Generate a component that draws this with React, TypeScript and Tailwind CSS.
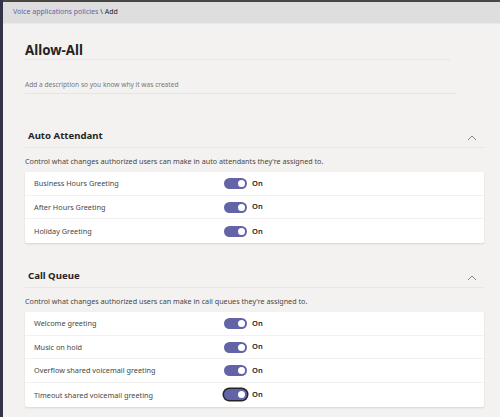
import React from "react";

const Toggle = ({ focused = false }: { focused?: boolean }) => (
  <div
    className={
      "relative w-[23px] h-[11px] rounded-full bg-[#6264a7] " +
      (focused ? "ring-[1.5px] ring-[#252423]" : "")
    }
  >
    <div className="absolute right-[2px] top-[2px] w-[7px] h-[7px] rounded-full bg-white" />
  </div>
);

const Row = ({ label, focused = false, last = false }: { label: string; focused?: boolean; last?: boolean }) => (
  <div className={"flex items-center h-[23.7px] " + (last ? "" : "border-b border-[#f1f1f1]")}>
    <div className="w-[199px] pl-[9px] text-[7.3px] text-[#484644]">{label}</div>
    <Toggle focused={focused} />
    <div className="ml-[5px] text-[7.5px] font-semibold text-[#252423]">On</div>
  </div>
);

const Chevron = () => (
  <svg width="10" height="6" viewBox="0 0 10 6" className="mr-[7px]">
    <path d="M1 5 L5 1 L9 5" stroke="#8a8886" strokeWidth="1" fill="none" />
  </svg>
);

const Section = ({ title, desc, rows, top }: { title: string; desc: string; rows: { l: string; f?: boolean }[]; top: string }) => (
  <div className={top}>
    <div className="flex items-center justify-between h-[20px] pl-[3px] border-b border-[#e8e7e6] w-[459px]">
      <div className="text-[9.6px] font-bold text-[#252423] -mt-[2px]">{title}</div>
      <Chevron />
    </div>
    <div className="mt-[6px] text-[7.2px] text-[#484644] leading-[14px]">{desc}</div>
    <div className="mt-[4px] w-[459px] bg-white rounded-[2px] shadow-[0_1px_2px_rgba(0,0,0,0.12)]">
      {rows.map((r, i) => (
        <Row key={r.l} label={r.l} focused={r.f} last={i === rows.length - 1} />
      ))}
    </div>
  </div>
);

export default function App() {
  return (
    <div className="w-[500px] h-[417px] overflow-hidden bg-[#f3f2f1] flex font-['Segoe_UI','Noto_Sans',sans-serif]">
      <div className="w-[3px] h-full bg-[#33344a] shrink-0" />
      <div className="flex-1 flex flex-col">
        <div className="h-[2px] bg-[#4a4642]" />
        <div className="h-[22px] bg-[#dedede] border-b border-[#e9e9e9] flex items-center pl-[10px] text-[7px]">
          <span className="text-[#6264a7]">Voice applications policies</span>
          <span className="text-[#252423] ml-[2px]">\ Add</span>
        </div>
        <div className="pl-[22px]">
          <div className="w-[425px] border-b border-[#e8e7e6] h-[36px] pt-[16px]">
            <div className="text-[13.3px] leading-[20px] font-bold text-[#252423]">Allow-All</div>
          </div>
          <div className="w-[431px] border-b border-[#e6e5e4] h-[34px] flex items-end pb-[2px]">
            <div className="text-[6.6px] leading-[12px] text-[#797775]">Add a description so you know why it was created</div>
          </div>
          <Section
            top="mt-[34px]"
            title="Auto Attendant"
            desc="Control what changes authorized users can make in auto attendants they're assigned to."
            rows={[{ l: "Business Hours Greeting" }, { l: "After Hours Greeting" }, { l: "Holiday Greeting" }]}
          />
          <Section
            top="mt-[25px]"
            title="Call Queue"
            desc="Control what changes authorized users can make in call queues they're assigned to."
            rows={[
              { l: "Welcome greeting" },
              { l: "Music on hold" },
              { l: "Overflow shared voicemail greeting" },
              { l: "Timeout shared voicemail greeting", f: true },
            ]}
          />
        </div>
      </div>
    </div>
  );
}
